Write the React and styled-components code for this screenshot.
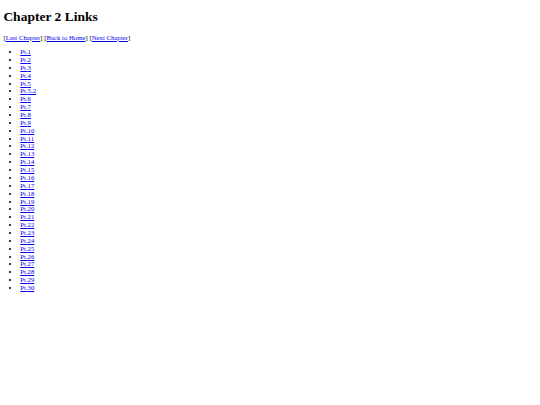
import React from "react";
import styled, { createGlobalStyle } from "styled-components";

const S = 0.421875;
const LINE = 7.86;

const Global = createGlobalStyle`
  html, body { background: #ffffff; }
  body {
    margin: 0 ${8 * S}px ${8 * S}px;
    font-family: "Liberation Serif", "Times New Roman", serif;
    font-size: ${16 * S}px;
    line-height: ${LINE}px;
    color: #000000;
  }
`;

const Page = styled.main`
  display: flow-root;
`;

const Title = styled.h1`
  font-size: ${32 * S}px;
  line-height: 15.5px;
  height: 15.5px;
  font-weight: bold;
  margin: ${21.44 * S}px 0;
`;

const Nav = styled.p`
  margin: ${16 * S}px 0;
  height: ${LINE}px;
`;

const Link = styled.a`
  color: #0000ee;
  text-decoration: underline;
`;

const List = styled.ul`
  margin: ${16 * S}px 0;
  padding-left: ${40 * S}px;
  list-style: disc;
`;

const Item = styled.li`
  height: ${LINE}px;
`;

const parts = [
  "1", "2", "3", "4", "5", "5.2", "6", "7", "8", "9", "10", "11", "12", "13",
  "14", "15", "16", "17", "18", "19", "20", "21", "22", "23", "24", "25", "26",
  "27", "28", "29", "30",
];

export default function App() {
  return (
    <Page>
      <Global />
      <Title>Chapter 2 Links</Title>
      <Nav>
        [<Link href="#">Last Chapter</Link>] [<Link href="#">Back to Home</Link>] [
        <Link href="#">Next Chapter</Link>]
      </Nav>
      <List>
        {parts.map((p) => (
          <Item key={p}>
            <Link href="#">Pt.{p}</Link>
          </Item>
        ))}
      </List>
    </Page>
  );
}
